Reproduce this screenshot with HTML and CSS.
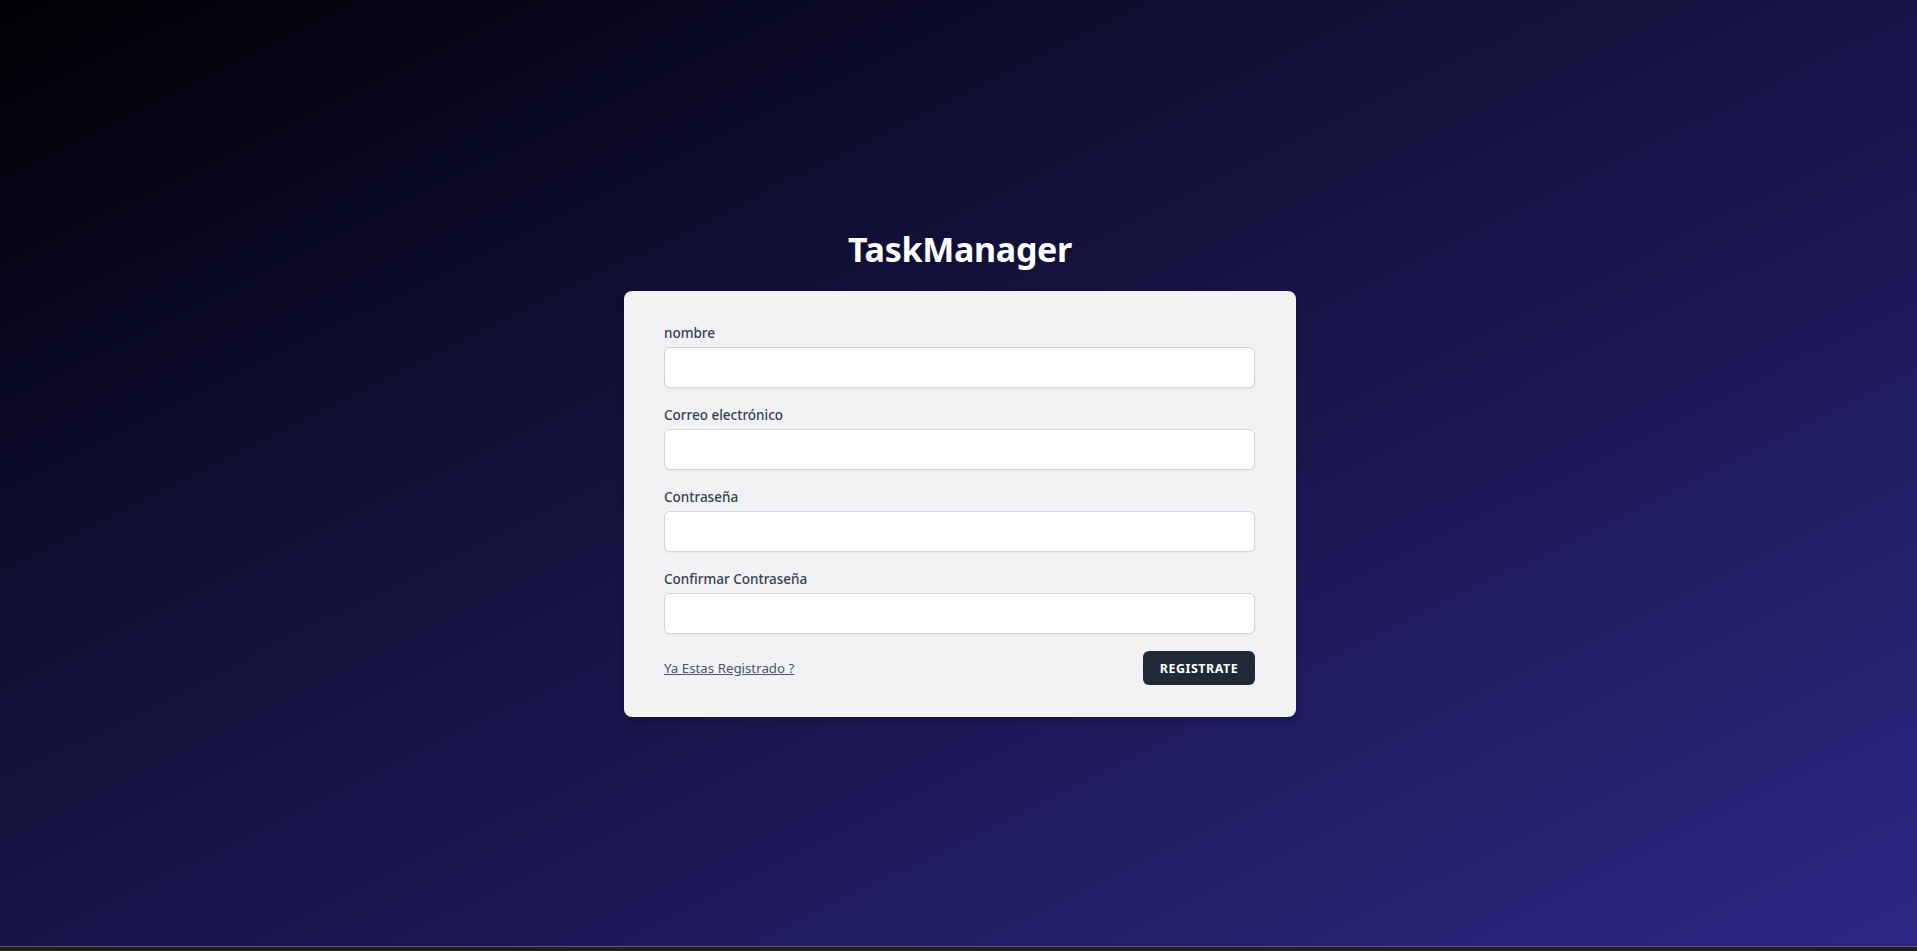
FILE: index.html
```html
<!DOCTYPE html>
<html lang="es">
<head>
<meta charset="utf-8">
<title>TaskManager - Registro</title>
<link rel="stylesheet" href="styles.css">
</head>
<body>
<main class="page">
  <div class="auth">
    <h1 class="brand">TaskManager</h1>
    <form class="card">
      <div class="field">
        <label class="label" for="nombre">nombre</label>
        <input class="input" id="nombre" type="text">
      </div>
      <div class="field">
        <label class="label" for="email">Correo electrónico</label>
        <input class="input" id="email" type="email">
      </div>
      <div class="field">
        <label class="label" for="password">Contraseña</label>
        <input class="input" id="password" type="password">
      </div>
      <div class="field">
        <label class="label" for="password2">Confirmar Contraseña</label>
        <input class="input" id="password2" type="password">
      </div>
      <div class="actions">
        <a class="link" href="#">Ya Estas Registrado ?</a>
        <button class="btn" type="button">Registrate</button>
      </div>
    </form>
  </div>
</main>
<div class="bottombar"></div>
</body>
</html>
```

FILE: styles.css
```css
* { box-sizing: border-box; }
html, body { margin: 0; padding: 0; }
body {
  font-family: "Noto Sans", "Open Sans", "Liberation Sans", sans-serif;
  background: #1e1e1e;
  height: 951px;
  display: flex;
  flex-direction: column;
}
.page {
  height: 947px;
  background: linear-gradient(to bottom right, #000003 0%, #0d0b2a 25%, #19164c 55%, #2d2886 100%);
  display: flex;
  align-items: center;
  justify-content: center;
  border-bottom: 1px solid #5a5a5e;
}
.bottombar { flex: 1; background: #1f1f1f; }
.auth {
  width: 672px;
  display: flex;
  flex-direction: column;
  align-items: center;
  margin-left: 3px;
}
.brand {
  margin: 0 0 22px;
  color: #ffffff;
  font-size: 34px;
  line-height: 40px;
  font-weight: 700;
  letter-spacing: -0.3px;
}
.card {
  width: 672px;
  background: #f2f2f4;
  border-radius: 8px;
  padding: 32px 41px 32px 40px;
  box-shadow: 0 4px 6px rgba(0,0,0,0.2);
}
.field { margin-bottom: 17px; }
.label {
  display: block;
  font-size: 13.5px;
  line-height: 20px;
  font-weight: 500;
  color: #374151;
  margin-bottom: 4px;
}
.input {
  display: block;
  width: 100%;
  height: 41px;
  background: #ffffff;
  border: 1px solid #d4d5dc;
  border-radius: 6px;
  box-shadow: 0 1px 2px rgba(0,0,0,0.05);
}
.actions {
  display: flex;
  justify-content: space-between;
  align-items: center;
}
.link {
  font-size: 13.3px;
  color: #4b5563;
  text-decoration: underline;
}
.btn {
  height: 34px;
  width: 112px;
  background: #1f2937;
  color: #ffffff;
  border: 0;
  border-radius: 6px;
  font-family: inherit;
  font-size: 12.5px;
  font-weight: 700;
  text-transform: uppercase;
  letter-spacing: 0.04em;
}
```
